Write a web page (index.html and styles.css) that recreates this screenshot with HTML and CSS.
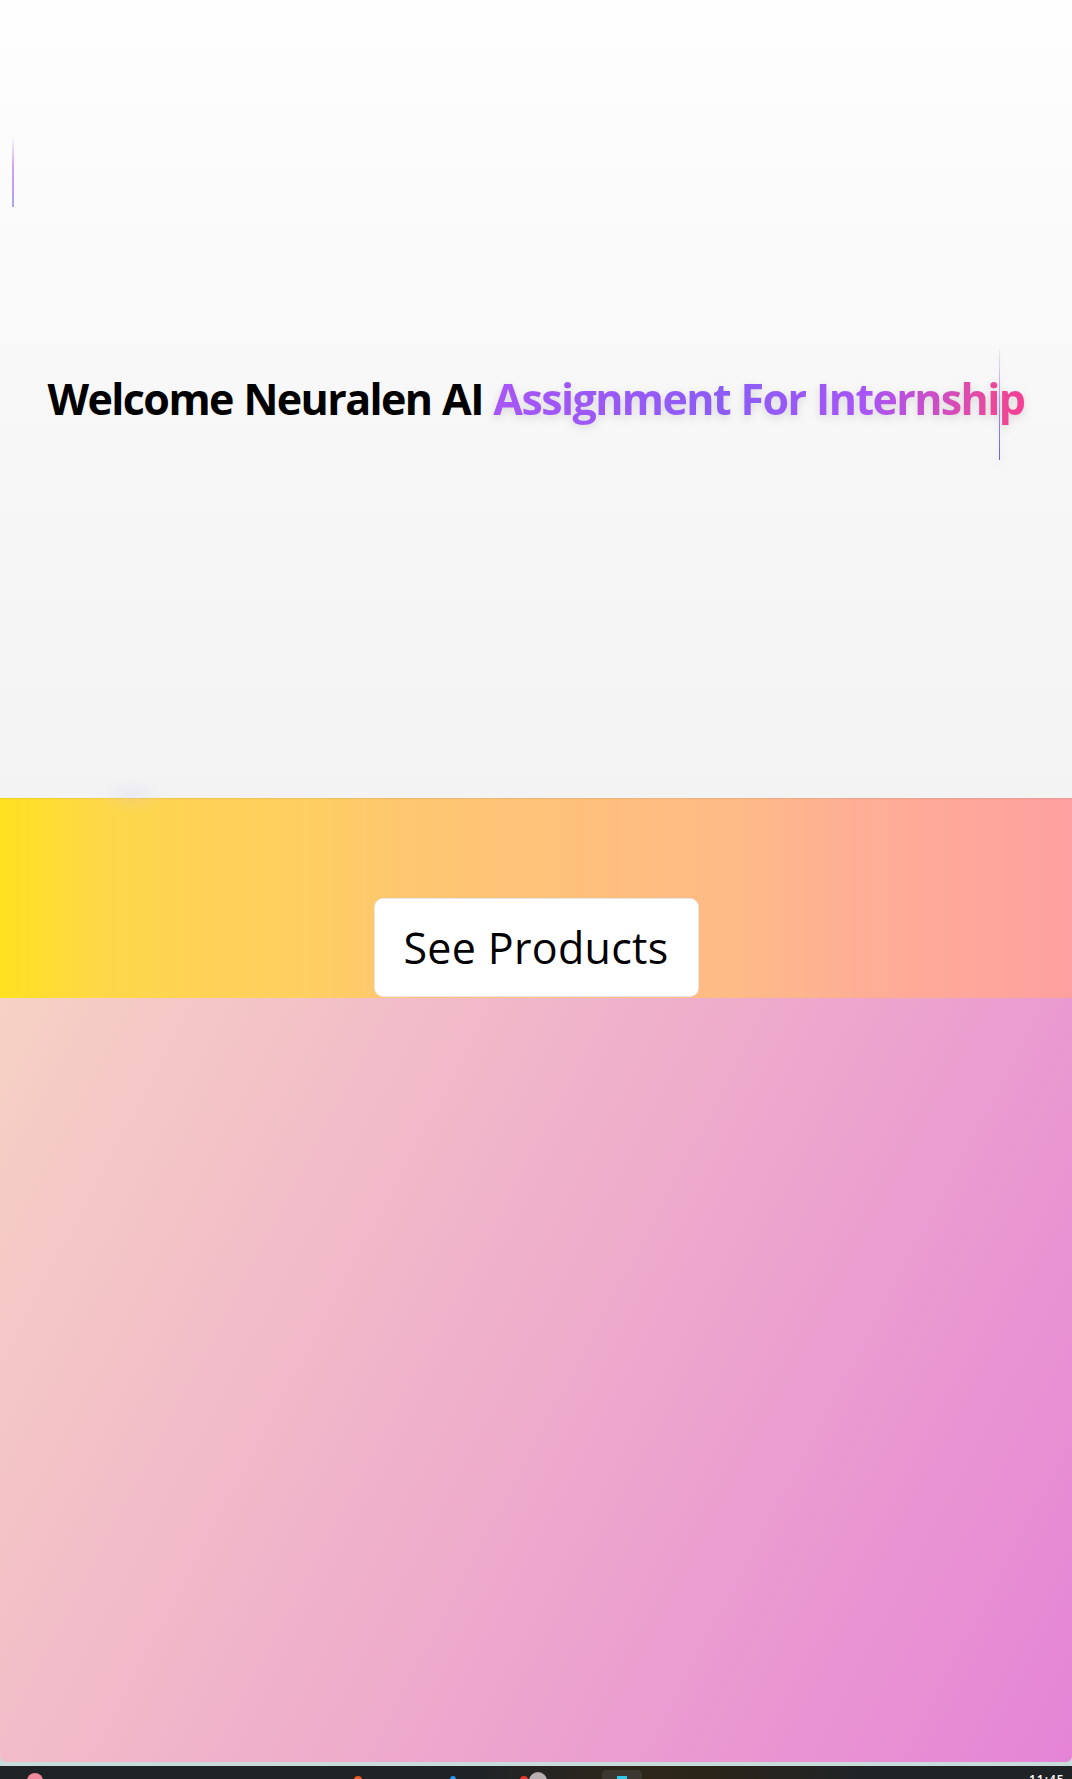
FILE: index.html
```html
<!DOCTYPE html>
<html lang="en">
<head>
<meta charset="utf-8">
<title>Neuralen AI</title>
<link rel="stylesheet" href="styles.css">
</head>
<body>
<div class="window">
  <section class="hero">
    <span class="beam beam-left"></span>
    <h1 class="title">Welcome Neuralen AI <span class="accent">Assignment For Internship<span class="caret"></span></span></h1>
    <span class="glow"></span>
  </section>
  <section class="band">
    <button class="cta" type="button">See Products</button>
  </section>
  <section class="pink"></section>
</div>
<div class="taskbar">
  <span class="tb-icon tb-pink"></span>
  <span class="tb-icon tb-orange"></span>
  <span class="tb-icon tb-blue"></span>
  <span class="tb-icon tb-red"></span>
  <span class="tb-icon tb-avatar"></span>
  <span class="tb-active"><span class="tb-cyan"></span></span>
  <span class="tb-clock">11:45</span>
</div>
</body>
</html>
```

FILE: styles.css
```css
* { box-sizing: border-box; }

html, body {
  margin: 0;
  padding: 0;
}

body {
  width: 1072px;
  height: 1779px;
  overflow: hidden;
  background: #c8dcdc;
  font-family: "Open Sans", "Noto Sans", sans-serif;
}

.window {
  display: flex;
  flex-direction: column;
  height: 1762px;
  border-radius: 0 0 6px 6px;
  overflow: hidden;
}

.hero {
  position: relative;
  height: 798px;
  display: flex;
  align-items: center;
  justify-content: center;
  background: linear-gradient(180deg, #fefefe 0%, #f8f8f8 45%, #f3f3f3 100%);
  box-shadow: 0 1px 1px rgba(0, 0, 0, 0.05);
  z-index: 1;
}

.beam {
  position: absolute;
  width: 2px;
}

.beam-left {
  left: 12px;
  top: 137px;
  height: 70px;
  background: linear-gradient(180deg, rgba(200, 160, 248, 0) 0%, #d3a6f8 40%, #c29cf8 75%, #a9a4f8 100%);
}

.glow {
  position: absolute;
  left: 100px;
  top: 778px;
  width: 64px;
  height: 36px;
  border-radius: 50%;
  background: radial-gradient(closest-side, rgba(200, 195, 250, 0.18), rgba(200, 195, 250, 0));
}

.title {
  position: relative;
  margin: 0;
  font-size: 43px;
  font-weight: 700;
  letter-spacing: -1.6px;
  word-spacing: 1px;
  color: #000;
  white-space: nowrap;
  line-height: 1.2;
}

.accent {
  position: relative;
  background: linear-gradient(90deg, #a855f7 0%, #8b5cf6 45%, #a855f7 70%, #ec4899 95%, #f43f95 100%);
  -webkit-background-clip: text;
  background-clip: text;
  color: transparent;
  filter: drop-shadow(0 3px 4px rgba(0, 0, 0, 0.12));
}

.caret {
  position: absolute;
  right: 24px;
  top: -19px;
  width: 1px;
  height: 110px;
  background: linear-gradient(180deg, rgba(200, 170, 250, 0.2) 0%, #b19af5 40%, #6b5cf0 100%);
}

.band {
  height: 200px;
  display: flex;
  justify-content: center;
  align-items: flex-end;
  padding-bottom: 1px;
  background: linear-gradient(90deg, #ffe11f 0%, #fed847 9%, #fed256 19%, #fecf60 28%, #fec76f 37%, #febb86 68%, #feae95 80%, #fea09f 100%);
}

.cta {
  width: 325px;
  height: 99px;
  border: 1px solid #e6e6e6;
  border-radius: 9px;
  background: #ffffff;
  color: #000;
  font-family: "Open Sans", "Noto Sans", sans-serif;
  font-size: 43px;
  font-weight: 400;
  letter-spacing: 0.3px;
  padding: 0;
  cursor: pointer;
}

.pink {
  flex: 1;
  background: linear-gradient(118deg, #f6d1c4 0%, #eeaccb 50%, #e584d6 100%);
}

.taskbar {
  position: relative;
  margin-top: 4px;
  height: 13px;
  overflow: hidden;
  background: linear-gradient(90deg, #202326 0%, #202326 45%, #2e2719 60%, #2a2419 66%, #202326 80%, #202326 100%);
}

.tb-icon {
  position: absolute;
  top: 7px;
  border-radius: 50%;
}

.tb-pink { left: 27px; width: 16px; height: 16px; background: #f08a9c; }
.tb-orange { left: 354px; top: 10px; width: 8px; height: 8px; background: #f05a1e; }
.tb-blue { left: 450px; top: 10px; width: 6px; height: 8px; background: #1c9cf0; }
.tb-red { left: 520px; top: 10px; width: 8px; height: 8px; background: #e8382a; }
.tb-avatar { left: 529px; top: 6px; width: 18px; height: 18px; background: #b8b0b0; }

.tb-active {
  position: absolute;
  left: 602px;
  top: 4px;
  width: 40px;
  height: 20px;
  border-radius: 4px;
  background: #3b3731;
}

.tb-cyan {
  position: absolute;
  left: 15px;
  top: 6px;
  width: 10px;
  height: 8px;
  background: #2ec8e8;
}

.tb-clock {
  position: absolute;
  left: 1029px;
  top: 8px;
  color: #ffffff;
  font-family: "Open Sans", sans-serif;
  font-size: 12px;
  font-weight: 600;
  line-height: 12px;
  letter-spacing: 1px;
}
```
